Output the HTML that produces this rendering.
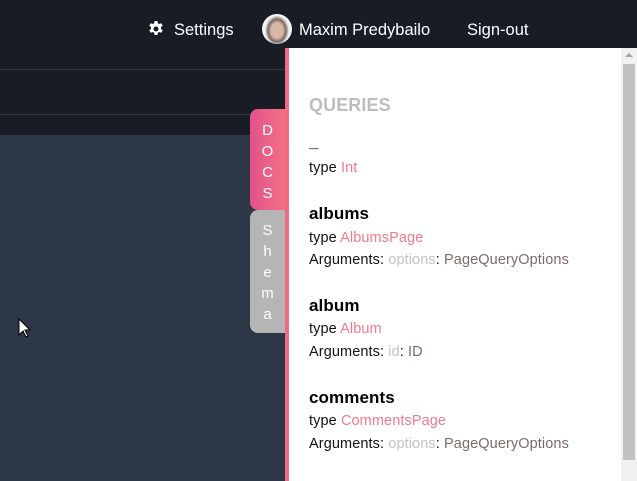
<!DOCTYPE html>
<html><head><style>
body{margin:0;width:637px;height:481px;overflow:hidden;background:#2d3745;font-family:"Liberation Sans",Roboto,sans-serif;position:relative}
.hdr{position:absolute;left:0;top:0;width:637px;height:48px;background:#171c25;color:#fff;font-size:16.5px}
.hdr span{position:absolute;top:21px}
.b1{position:absolute;left:0;top:48px;width:285px;height:87px;background:#171c25}
.l{position:absolute;left:0;width:285px;height:1px;background:#2e3642}
.panel{position:absolute;left:285px;top:48px;width:336px;height:433px;background:#fff;border-left:4px solid #f06a86;box-sizing:border-box}
.sb{position:absolute;left:621px;top:48px;width:16px;height:433px;background:#f1f1f1}
.thumb{position:absolute;left:623px;top:64px;width:12px;height:396px;background:#c1c1c1}
.tab{position:absolute;left:250px;width:35px;color:#fff;font-size:15px;text-align:center;line-height:21px;border-radius:8px 0 0 8px;box-sizing:border-box;padding-top:11px}
.c{position:absolute;left:309px;font-size:14.5px;color:#111;letter-spacing:0.1px}
.h{font-weight:bold;font-size:17px;color:#000}
.p{color:#f0798f}.g{color:#c4c4c4}.t{color:#7c6a6a}
</style></head><body>
<div class="hdr">
<svg style="position:absolute;left:148px;top:21px" width="16" height="16" viewBox="0 0 16 16"><path fill="#fff" d="M6.6 0h2.8l.4 2.2 1.4.8 2.1-.8 1.4 2.4-1.7 1.5v1.8l1.7 1.5-1.4 2.4-2.1-.8-1.4.8-.4 2.2H6.6l-.4-2.2-1.4-.8-2.1.8-1.4-2.4 1.7-1.5V6.1L1.3 4.6 2.7 2.2l2.1.8 1.4-.8z"/><circle cx="8" cy="8" r="2.5" fill="#171c25"/></svg>
<span style="left:174px">Settings</span>
<div style="position:absolute;left:262px;top:14px;width:30px;height:30px;border-radius:50%;background:radial-gradient(ellipse 40% 50% at 50% 55%,#d9b8a8 50%,#7a6a62 75%,#f4f4f4 100%)"></div>
<span style="left:299px">Maxim Predybailo</span>
<span style="left:467px">Sign-out</span>
</div>
<div class="b1"></div>
<div class="l" style="top:69px"></div>
<div class="l" style="top:114px"></div>
<svg style="position:absolute;left:18px;top:318px" width="14" height="20" viewBox="0 0 14 20"><path d="M1 1v16l4-4 3 6 2-1-3-6h5z" fill="#fff" stroke="#000" stroke-width="1"/></svg>
<div class="panel"></div>
<div class="sb"></div><div class="thumb"></div>
<svg style="position:absolute;left:625px;top:52px" width="8" height="6"><path d="M0 5L4 1 8 5z" fill="#a3a3a3"/></svg>
<div class="tab" style="top:109px;height:101px;background:linear-gradient(90deg,#e2528a,#f27184)">D<br>O<br>C<br>S</div>
<div class="tab" style="top:210px;height:123px;background:#b5b5b5;padding-top:10px">S<br>h<br>e<br>m<br>a</div>
<div class="c" style="top:95px;font-size:18px;font-weight:bold;color:#bdbdbd">QUERIES</div>
<div class="c h" style="top:132px">_</div>
<div class="c" style="top:160px">type <span class="p">Int</span></div>
<div class="c h" style="top:204px">albums</div>
<div class="c" style="top:230px">type <span class="p">AlbumsPage</span></div>
<div class="c" style="top:252px">Arguments: <span class="g">options</span>: <span class="t">PageQueryOptions</span></div>
<div class="c h" style="top:296px">album</div>
<div class="c" style="top:321px">type <span class="p">Album</span></div>
<div class="c" style="top:344px">Arguments: <span class="g">id</span>: <span class="t">ID</span></div>
<div class="c h" style="top:388px">comments</div>
<div class="c" style="top:413px">type <span class="p">CommentsPage</span></div>
<div class="c" style="top:436px">Arguments: <span class="g">options</span>: <span class="t">PageQueryOptions</span></div>
</body></html>
